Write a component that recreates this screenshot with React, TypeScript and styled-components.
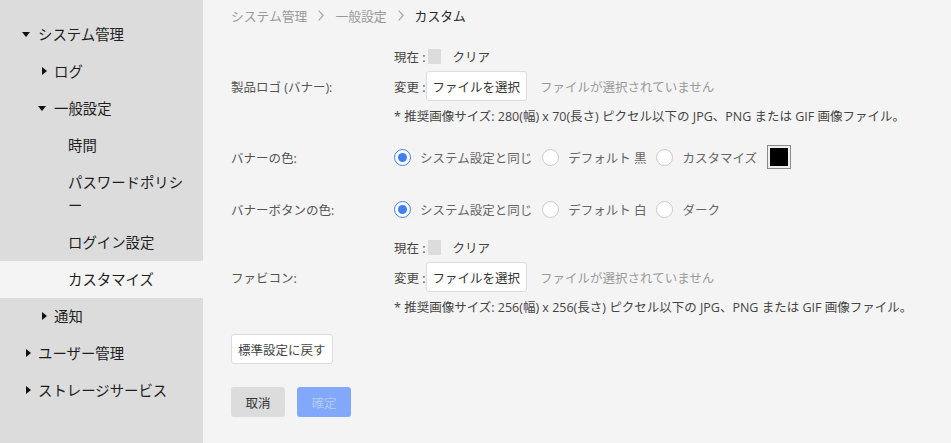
import styled, { createGlobalStyle } from "styled-components";

const GlobalStyle = createGlobalStyle`
  html, body {
    margin: 0;
    padding: 0;
    background: #f4f4f4;
  }
  body {
    font-family: "Open Sans", "Noto Sans CJK JP", sans-serif;
  }
`;

const Page = styled.div`
  display: flex;
  width: 951px;
  height: 443px;
  overflow: hidden;
`;

const Sidebar = styled.nav`
  width: 203px;
  flex-shrink: 0;
  background: #dcdcdc;
  padding-top: 16px;
  box-sizing: border-box;
`;

const NavItem = styled.div<{ $indent: number; $active?: boolean }>`
  display: flex;
  align-items: flex-start;
  padding: 7px 14px 7px ${(p) => p.$indent}px;
  background: ${(p) => (p.$active ? "#f4f4f4" : "transparent")};
  font-size: 14.4px;
  line-height: 23px;
  color: #1e1e1e;
`;

const CaretSlot = styled.span`
  width: 18px;
  height: 22px;
  flex-shrink: 0;
  display: flex;
  align-items: center;
`;

const Caret = styled.span<{ $open?: boolean }>`
  width: 0;
  height: 0;
  margin-left: ${(p) => (p.$open ? "2px" : "6px")};
  ${(p) =>
    p.$open
      ? `border-left: 4px solid transparent;
         border-right: 4px solid transparent;
         border-top: 5px solid #111;`
      : `border-top: 4px solid transparent;
         border-bottom: 4px solid transparent;
         border-left: 5px solid #111;`}
`;

const Main = styled.main`
  flex: 1;
  padding: 5px 0 0 28px;
  font-size: 12.5px;
  color: #555;
`;

const Breadcrumb = styled.div`
  display: flex;
  align-items: center;
  gap: 11px;
  height: 20px;
  color: #999;
  font-size: 12.8px;
`;

const Crumb = styled.span<{ $current?: boolean }>`
  color: ${(p) => (p.$current ? "#2a2a2a" : "#999")};
`;

const FormRow = styled.div<{ $top: number }>`
  display: grid;
  grid-template-columns: 163px 1fr;
  align-items: center;
  margin-top: ${(p) => p.$top}px;
`;

const Label = styled.div`
  color: #555;
`;

const Stack = styled.div`
  display: flex;
  flex-direction: column;
`;

const Line = styled.div<{ $h?: number }>`
  display: flex;
  align-items: center;
  height: ${(p) => p.$h ?? 29}px;
  color: #444;
`;

const Preview = styled.span`
  display: inline-block;
  width: 13px;
  height: 15px;
  background: #dcdcdc;
  margin: 0 12px 0 2px;
`;

const FileButton = styled.button`
  height: 30px;
  padding: 0 6px;
  margin-left: 0;
  background: #fff;
  border: 1px solid #dcdcdc;
  border-radius: 3px;
  font: inherit;
  color: #333;
`;

const Muted = styled.span`
  color: #999;
  margin-left: 13px;
`;

const RadioGroup = styled.div`
  display: flex;
  align-items: center;
  height: 24px;
`;

const RadioLabel = styled.label`
  display: flex;
  align-items: center;
  color: #666;
  margin-right: 10px;
`;

const RadioCircle = styled.span<{ $checked?: boolean }>`
  width: 17px;
  height: 17px;
  box-sizing: border-box;
  border-radius: 50%;
  background: #fff;
  border: 1px solid ${(p) => (p.$checked ? "#3f7ef5" : "#c9c9c9")};
  margin-right: 9px;
  display: flex;
  align-items: center;
  justify-content: center;
  &::after {
    content: "";
    width: 9px;
    height: 9px;
    border-radius: 50%;
    background: ${(p) => (p.$checked ? "#3f7ef5" : "transparent")};
  }
`;

const Swatch = styled.span`
  width: 24px;
  height: 24px;
  box-sizing: border-box;
  border: 1px solid #8a8a8a;
  padding: 2px;
  background: #eee;
  display: flex;
  &::after {
    content: "";
    flex: 1;
    background: #000;
  }
`;

const Button = styled.button<{ $variant?: "plain" | "muted" | "primary" }>`
  height: 30px;
  padding: 0 ${(p) => (p.$variant === "plain" ? "6px" : "0")};
  width: ${(p) => (p.$variant === "plain" ? "auto" : "54px")};
  border-radius: 3px;
  font: inherit;
  border: 1px solid
    ${(p) => (p.$variant === "plain" ? "#dcdcdc" : "transparent")};
  background: ${(p) =>
    p.$variant === "primary"
      ? "#82a8fb"
      : p.$variant === "muted"
      ? "#dcdcdc"
      : "#fff"};
  color: ${(p) =>
    p.$variant === "primary" ? "#b3c8f3" : p.$variant === "muted" ? "#333" : "#444"};
`;

const ButtonRow = styled.div<{ $top: number }>`
  display: flex;
  gap: 12px;
  margin-top: ${(p) => p.$top}px;
`;

type Nav = { label: string; depth: number; caret?: "open" | "closed"; active?: boolean };

const navItems: Nav[] = [
  { label: "システム管理", depth: 0, caret: "open" },
  { label: "ログ", depth: 1, caret: "closed" },
  { label: "一般設定", depth: 1, caret: "open" },
  { label: "時間", depth: 2 },
  { label: "パスワードポリシー", depth: 2 },
  { label: "ログイン設定", depth: 2 },
  { label: "カスタマイズ", depth: 2, active: true },
  { label: "通知", depth: 1, caret: "closed" },
  { label: "ユーザー管理", depth: 0, caret: "closed" },
  { label: "ストレージサービス", depth: 0, caret: "closed" },
];

const indents = [20, 36, 50];

const Chevron = () => (
  <svg width="6" height="11" viewBox="0 0 6 11" fill="none">
    <path d="M0.7 0.7 L5.2 5.5 L0.7 10.3" stroke="#a0a0a0" strokeWidth="1.1" />
  </svg>
);

const Radio = ({ label, checked }: { label: string; checked?: boolean }) => (
  <RadioLabel>
    <RadioCircle $checked={checked} />
    {label}
  </RadioLabel>
);

const FileField = ({ note }: { note: string }) => (
  <Stack>
    <Line>
      現在 :<Preview />
      クリア
    </Line>
    <Line $h={30}>
      変更 :<FileButton>ファイルを選択</FileButton>
      <Muted>ファイルが選択されていません</Muted>
    </Line>
    <Line>{note}</Line>
  </Stack>
);

export default function App() {
  return (
    <>
      <GlobalStyle />
      <Page>
        <Sidebar>
          {navItems.map((item) => (
            <NavItem key={item.label} $indent={indents[item.depth]} $active={item.active}>
              <CaretSlot>{item.caret && <Caret $open={item.caret === "open"} />}</CaretSlot>
              <span>{item.label}</span>
            </NavItem>
          ))}
        </Sidebar>
        <Main>
          <Breadcrumb>
            <Crumb>システム管理</Crumb>
            <Chevron />
            <Crumb>一般設定</Crumb>
            <Chevron />
            <Crumb $current>カスタム</Crumb>
          </Breadcrumb>
          <FormRow $top={17}>
            <Label>製品ロゴ (バナー):</Label>
            <FileField note="* 推奨画像サイズ: 280(幅) x 70(長さ) ピクセル以下の JPG、PNG または GIF 画像ファイル。" />
          </FormRow>
          <FormRow $top={15}>
            <Label>バナーの色:</Label>
            <RadioGroup>
              <Radio label="システム設定と同じ" checked />
              <Radio label="デフォルト 黒" />
              <Radio label="カスタマイズ" />
              <Swatch />
            </RadioGroup>
          </FormRow>
          <FormRow $top={28}>
            <Label>バナーボタンの色:</Label>
            <RadioGroup>
              <Radio label="システム設定と同じ" checked />
              <Radio label="デフォルト 白" />
              <Radio label="ダーク" />
            </RadioGroup>
          </FormRow>
          <FormRow $top={12}>
            <Label>ファビコン:</Label>
            <FileField note="* 推奨画像サイズ: 256(幅) x 256(長さ) ピクセル以下の JPG、PNG または GIF 画像ファイル。" />
          </FormRow>
          <ButtonRow $top={13}>
            <Button $variant="plain">標準設定に戻す</Button>
          </ButtonRow>
          <ButtonRow $top={23}>
            <Button $variant="muted">取消</Button>
            <Button $variant="primary">確定</Button>
          </ButtonRow>
        </Main>
      </Page>
    </>
  );
}
